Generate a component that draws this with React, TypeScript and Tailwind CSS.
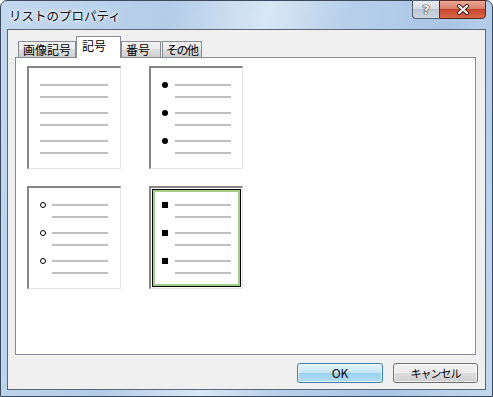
const jp = "font-['Noto_Sans_CJK_JP','Noto_Sans',sans-serif]";

function Line({ w }: { w: number }) {
  return <div className="h-[2px] bg-[#c0c0c0]" style={{ width: w }} />;
}

type Marker = 'none' | 'dot' | 'circle' | 'square';

function MarkerGlyph({ kind }: { kind: Marker }) {
  if (kind === 'dot') return <div className="w-[6px] h-[6px] shrink-0 rounded-full bg-black" />;
  if (kind === 'circle') return <div className="w-[6px] h-[6px] shrink-0 rounded-full border border-black bg-white" />;
  if (kind === 'square') return <div className="w-[6px] h-[6px] shrink-0 bg-black" />;
  return null;
}

function Preview({ kind, selected }: { kind: Marker; selected?: boolean }) {
  const groups = [0, 1, 2];
  return (
    <div className="relative w-[94px] h-[103px] bg-white border-t-2 border-l-2 border-r border-b border-t-[#858585] border-l-[#858585] border-r-[#e3e3e3] border-b-[#e3e3e3]">
      <div className="flex flex-col gap-[14px] pt-[16px] pl-[11px]">
        {groups.map((g) => (
          <div key={g} className="flex flex-col gap-[10px]">
            <div className="flex items-center h-[2px]">
              {kind === 'none' ? (
                <Line w={68} />
              ) : (
                <>
                  <MarkerGlyph kind={kind} />
                  <div className={kind === 'circle' ? 'ml-[6px]' : 'ml-[7px]'}>
                    <Line w={56} />
                  </div>
                </>
              )}
            </div>
            <div className={kind === 'none' ? '' : kind === 'circle' ? 'ml-[12px]' : 'ml-[13px]'}>
              <Line w={kind === 'none' ? 68 : 56} />
            </div>
          </div>
        ))}
      </div>
      {selected && (
        <div className="absolute inset-[1px] border border-black">
          <div className="w-full h-full border-2 border-[#a4cc89]" />
        </div>
      )}
    </div>
  );
}

function Tab({ label, w, active, tight }: { label: string; w: number; active?: boolean; tight?: boolean }) {
  if (active)
    return (
      <div
        className="relative z-10 -mb-px h-[22px] bg-white border border-b-0 border-[#898c95] pl-[5px] text-[12px] leading-[15px] pt-px text-black"
        style={{ width: w }}
      >
        {label}
      </div>
    );
  return (
    <div
      className={`h-[16px] border border-b-0 border-[#898c95] bg-[linear-gradient(#f3f3f3,#ebebeb_45%,#dddddd_50%,#cfcfcf)] text-[12px] leading-[14px] pt-px text-black whitespace-nowrap overflow-hidden ${tight ? 'pl-[3px] tracking-[-1.5px]' : 'pl-[4px]'}`}
      style={{ width: w }}
    >
      {label}
    </div>
  );
}

export default function App() {
  return (
    <div className={`w-[493px] h-[397px] flex flex-col rounded-t-[7px] border border-[#3a4b60] bg-[linear-gradient(100deg,#c4d9ef_0%,#b3cce8_30%,#d9e7f5_48%,#b7cfea_62%,#aac6e6_80%,#c3d8ee_100%)] ${jp}`}>
      <div className="h-[28px] flex items-start shrink-0">
        <div className="pl-[8px] pt-[7px] text-[12.5px] leading-[16px] text-[#111] [text-shadow:0_0_6px_#fff,0_0_3px_#fff]">
          リストのプロパティ
        </div>
        <div className="ml-auto mr-[6px] -mt-px flex">
          <div className="w-[27px] h-[19px] rounded-bl-[4px] border border-r-0 border-[#55606f] bg-[linear-gradient(#e9eef4,#d3dbe5_45%,#bcc7d4_50%,#ccd6e2)] flex items-center justify-center text-[13px] font-bold text-[#f6f6f6] font-['DejaVu_Sans',sans-serif] [text-shadow:0_0_1px_#222,0_0_1px_#222,0_0_1px_#222]">
            ?
          </div>
          <div className="w-[47px] h-[19px] rounded-br-[4px] border border-[#5e2620] bg-[linear-gradient(#eaab9b,#d9806a_45%,#c6432a_50%,#d76a48)] flex items-center justify-center">
            <svg width="14" height="11" viewBox="0 0 14 11">
              <path d="M3 2 L11 9 M11 2 L3 9" stroke="#3b1a14" strokeWidth="4" strokeLinecap="round" />
              <path d="M3 2 L11 9 M11 2 L3 9" stroke="#ffffff" strokeWidth="2.2" strokeLinecap="round" />
            </svg>
          </div>
        </div>
      </div>

      <div className="mx-[6px] border border-[#5b6776] bg-[#f0f0f0] h-[361px] shrink-0 flex flex-col">
        <div className="pl-[10px] pt-[6px] flex items-end h-[27px]">
          <Tab label="画像記号" w={58} />
          <Tab label="記号" w={45} active />
          <Tab label="番号" w={40} />
          <div className="ml-px">
            <Tab label="その他" w={40} tight />
          </div>
        </div>
        <div className="ml-[7px] w-[461px] h-[298px] border border-[#898c95] bg-white">
          <div className="pl-[11px] pt-[8px] grid grid-cols-[94px_94px] gap-x-[28px] gap-y-[17px]">
            <Preview kind="none" />
            <Preview kind="dot" />
            <Preview kind="circle" />
            <Preview kind="square" selected />
          </div>
        </div>
        <div className="mt-[8px] flex justify-end gap-[10px] pr-[7px]">
          <div className="w-[86px] h-[20px] rounded-[3px] border border-[#3c7fb1] bg-[linear-gradient(#e5f4fc,#c4e5f6_50%,#98d1ef_50%,#b5dcf2)] shadow-[inset_0_0_0_1px_#ffffffaa] flex items-center justify-center text-[12px] text-black">
            OK
          </div>
          <div className="w-[85px] h-[20px] rounded-[3px] border border-[#707070] bg-[linear-gradient(#f2f2f2,#ebebeb_50%,#dddddd_50%,#cfcfcf)] shadow-[inset_0_0_0_1px_#ffffffaa] flex items-center justify-center text-[11px] tracking-[-1px] text-black">
            キャンセル
          </div>
        </div>
      </div>
    </div>
  );
}
